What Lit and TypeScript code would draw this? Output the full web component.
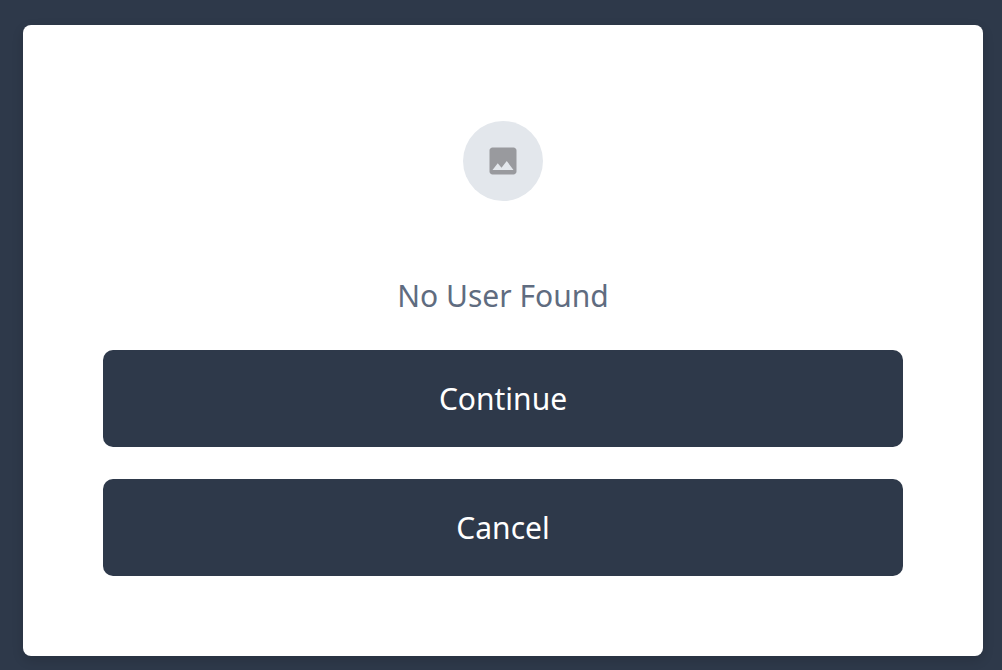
import { LitElement, html, css } from "lit";
import { customElement } from "lit/decorators.js";

@customElement("app-root")
export class AppRoot extends LitElement {
  static styles = css`
    :host {
      display: block;
      box-sizing: border-box;
      min-height: 100vh;
      padding: 25px 19px 14px 23px;
      background: #2e394a;
      font-family: "Noto Sans", "Open Sans", sans-serif;
    }
    .card {
      display: flex;
      flex-direction: column;
      align-items: center;
      padding: 96px 80px 80px;
      border-radius: 8px;
      background: #ffffff;
      box-shadow: 0 4px 12px rgba(0, 0, 0, 0.14);
    }
    .avatar {
      display: flex;
      align-items: center;
      justify-content: center;
      width: 80px;
      height: 80px;
      border-radius: 50%;
      background: #e3e7ec;
      color: #999a9e;
    }
    .icon {
      width: 36px;
      height: 36px;
      fill: currentColor;
    }
    .message {
      margin: 72px 0 32px;
      font-size: 30px;
      line-height: 45px;
      font-weight: 400;
      color: #5f6c80;
      text-align: center;
    }
    .actions {
      display: flex;
      flex-direction: column;
      gap: 32px;
      width: 100%;
    }
    .button {
      padding: 26px 32px;
      border: 0;
      border-radius: 10px;
      background: #2e394a;
      color: #ffffff;
      font: inherit;
      font-size: 30px;
      line-height: 45px;
      cursor: pointer;
    }
  `;

  render() {
    return html`
      <main class="card">
        <div class="avatar">
          <svg class="icon" viewBox="0 0 24 24" aria-hidden="true">
            <path
              d="M21 19V5c0-1.1-.9-2-2-2H5c-1.1 0-2 .9-2 2v14c0 1.1.9 2 2 2h14c1.1 0 2-.9 2-2zM8.5 13.5l2.5 3.01L14.5 12l4.5 6H5l3.5-4.5z"
            />
          </svg>
        </div>
        <h1 class="message">No User Found</h1>
        <div class="actions">
          <button class="button" type="button">Continue</button>
          <button class="button" type="button">Cancel</button>
        </div>
      </main>
    `;
  }
}
